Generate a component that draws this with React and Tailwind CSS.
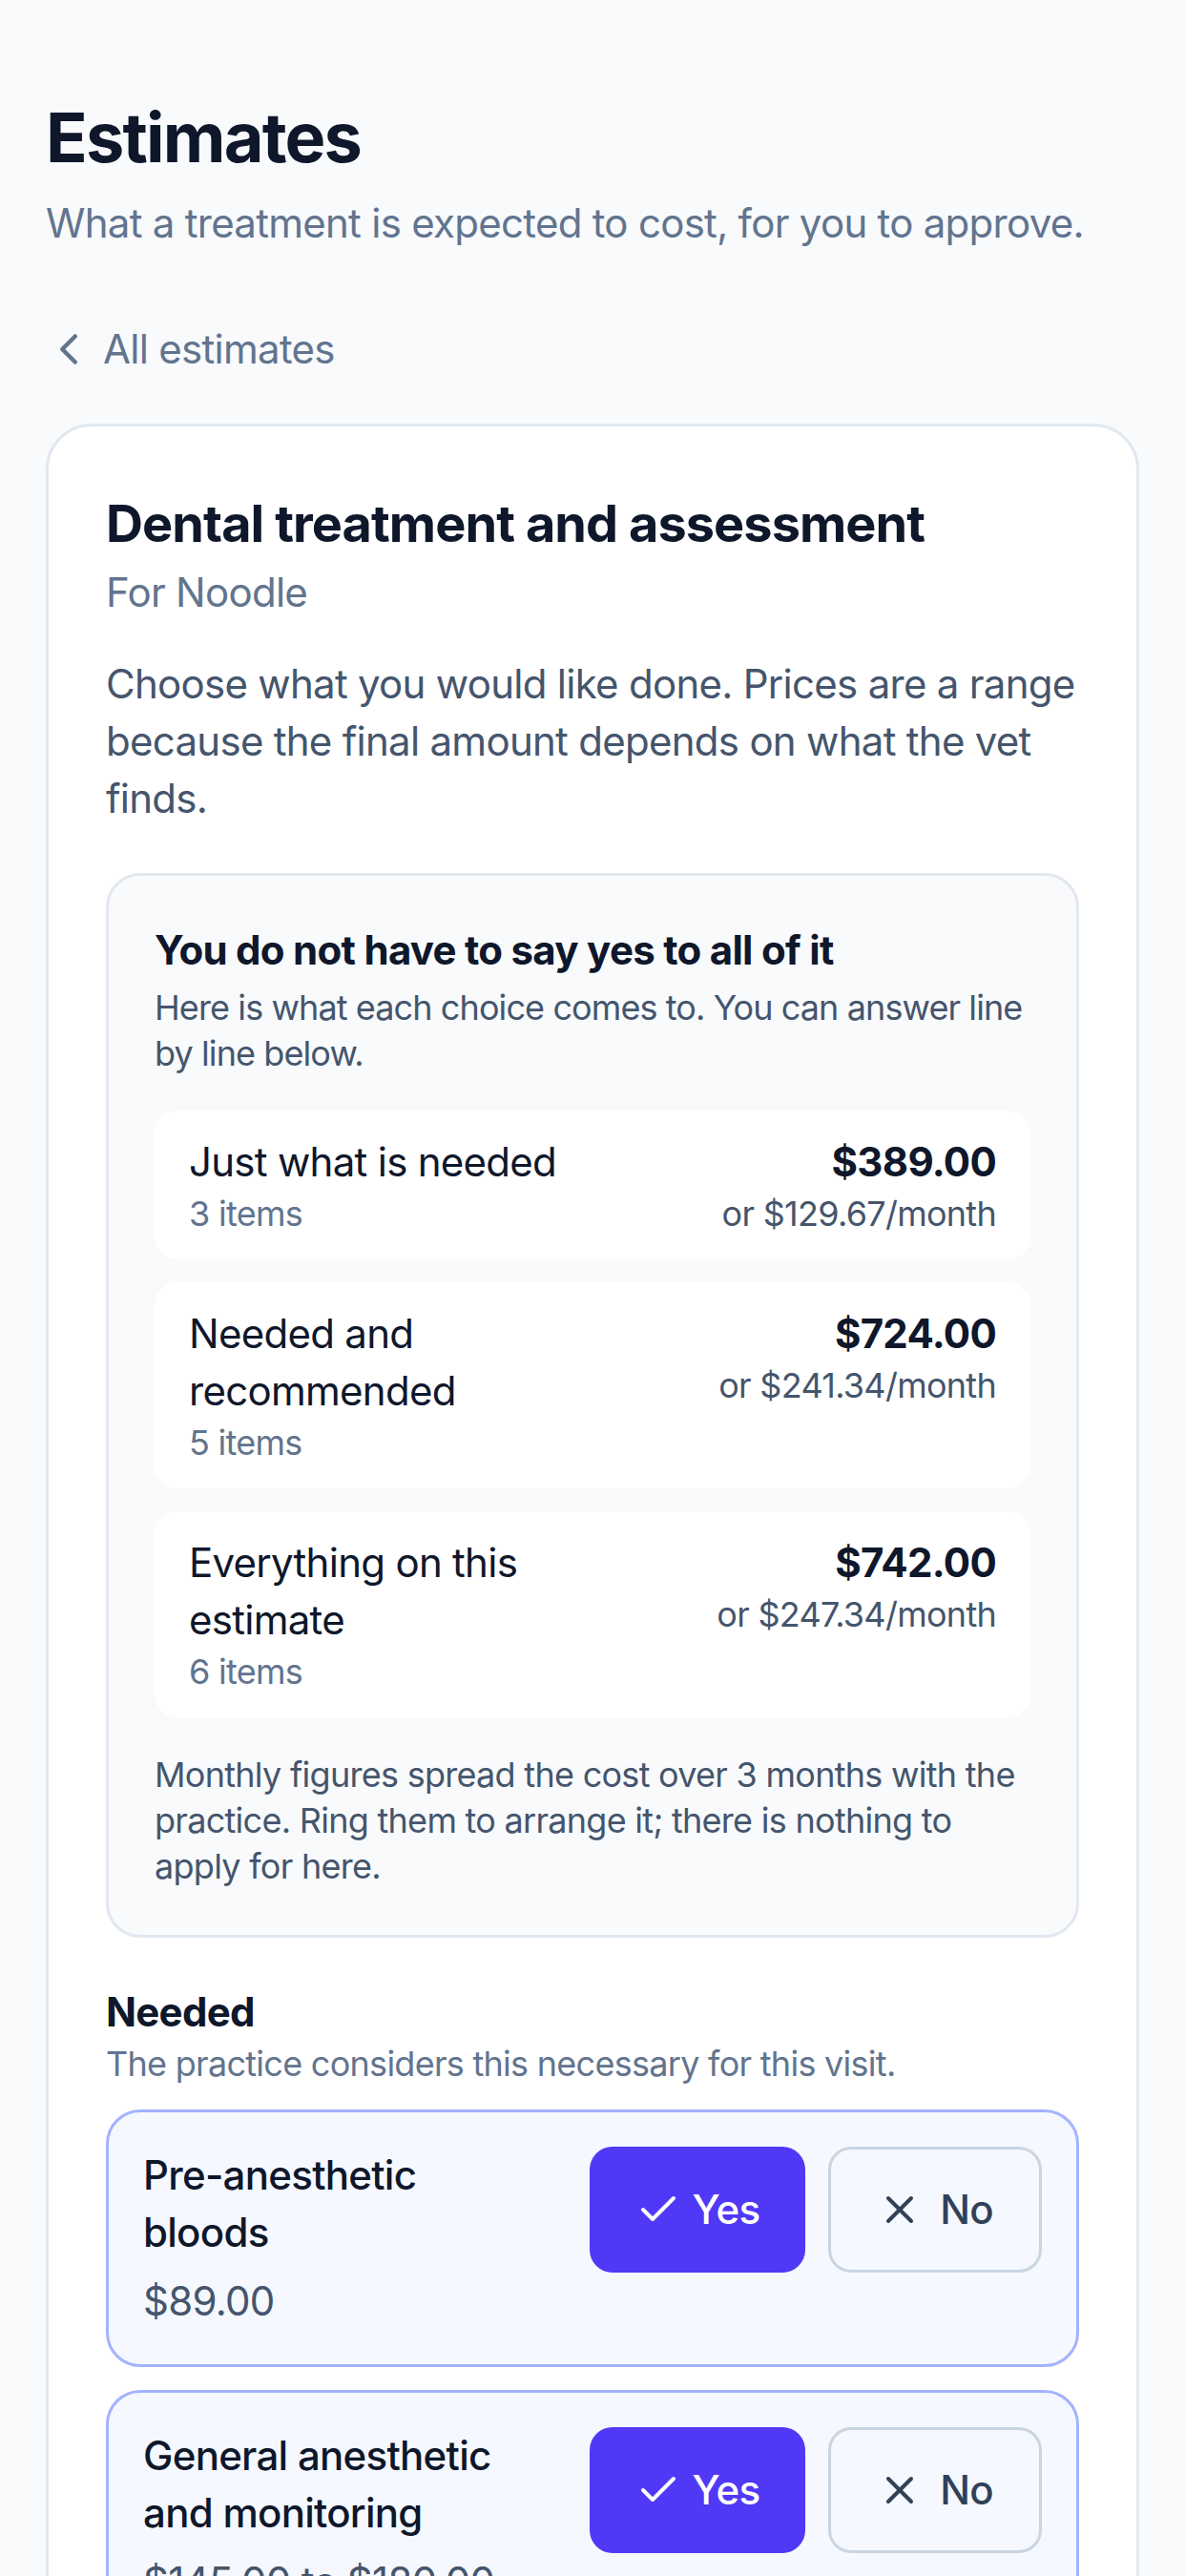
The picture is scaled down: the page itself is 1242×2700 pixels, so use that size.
import React, { useState } from "react";
import { Check, ChevronLeft, X } from "lucide-react";

const choices = [
  { label: "Just what is needed", count: "3 items", total: "$389.00", monthly: "or $129.67/month" },
  { label: "Needed and recommended", count: "5 items", total: "$724.00", monthly: "or $241.34/month" },
  { label: "Everything on this estimate", count: "6 items", total: "$742.00", monthly: "or $247.34/month" },
];

const sections = [
  {
    title: "Needed",
    note: "The practice considers this necessary for this visit.",
    items: [
      { id: "bloods", name: "Pre-anesthetic bloods", price: "$89.00" },
      { id: "ga", name: "General anesthetic and monitoring", price: "$145.00 to $180.00" },
      { id: "scale", name: "Scale and polish", price: "$120.00" },
    ],
  },
  {
    title: "Recommended",
    note: "The vet advises this, but it can wait if you prefer.",
    items: [
      { id: "xray", name: "Dental radiographs", price: "$210.00" },
      { id: "extract", name: "Extractions if required", price: "$0.00 to $125.00" },
    ],
  },
  {
    title: "Optional",
    note: "Nice to have. Entirely up to you.",
    items: [{ id: "chews", name: "Take-home dental chews", price: "$18.00" }],
  },
];

const AnswerRow = ({ item, answer, setAnswer }) => {
  const yes = answer === "yes";
  return (
    <div className="flex items-start justify-between gap-4 rounded-xl border border-indigo-300 bg-[#f5f8ff] p-3">
      <div className="min-w-0 flex-1">
        <p className="text-sm font-medium text-slate-900">{item.name}</p>
        <p className="mt-1 text-sm text-slate-600">{item.price}</p>
      </div>
      <div className="flex shrink-0 gap-2">
        <button
          type="button"
          onClick={() => setAnswer("yes")}
          className={
            yes
              ? "inline-flex h-11 items-center gap-1 rounded-lg bg-indigo-600 px-4 text-sm font-medium text-white"
              : "inline-flex h-11 items-center gap-1 rounded-lg border border-slate-300 px-4 text-sm font-medium text-slate-700"
          }
        >
          <Check size={16} />
          Yes
        </button>
        <button
          type="button"
          onClick={() => setAnswer("no")}
          className={
            !yes
              ? "inline-flex h-11 items-center gap-1.5 rounded-lg bg-slate-700 px-4 text-sm font-medium text-white"
              : "inline-flex h-11 items-center gap-1.5 rounded-lg border border-slate-300 px-4 text-sm font-medium text-slate-700"
          }
        >
          <X size={16} />
          No
        </button>
      </div>
    </div>
  );
};

export default function App() {
  const [answers, setAnswers] = useState({
    bloods: "yes",
    ga: "yes",
    scale: "yes",
    xray: "yes",
    extract: "yes",
    chews: "yes",
  });

  return (
    <div className="min-h-screen bg-slate-50 font-['Inter',sans-serif] tracking-[-0.015em]">
      <div className="w-[414px] px-4 pt-8 pb-10 [zoom:3]">
        <h1 className="text-2xl font-bold tracking-tight text-slate-900">Estimates</h1>
        <p className="mt-1 text-sm text-slate-500">
          What a treatment is expected to cost, for you to approve.
        </p>

        <a href="#" className="-ml-px mt-6 flex items-center gap-[3px] text-sm text-slate-500">
          <ChevronLeft size={18} />
          All estimates
        </a>

        <div className="mt-4 rounded-2xl border border-slate-200 bg-white p-5">
          <h2 className="text-lg font-bold tracking-[-0.017em] text-slate-900">
            Dental treatment and assessment
          </h2>
          <p className="text-sm text-slate-500">For Noodle</p>
          <p className="mt-3 text-sm text-slate-600">
            Choose what you would like done. Prices are a range because the final amount
            depends on what the vet finds.
          </p>

          <div className="mt-4 rounded-xl border border-slate-200 bg-slate-50 p-4">
            <h3 className="text-sm font-bold text-slate-900">You do not have to say yes to all of it</h3>
            <p className="mt-0.5 text-xs tracking-[-0.025em] text-slate-600">
              Here is what each choice comes to. You can answer line by line below.
            </p>
            <div className="mt-3 space-y-2">
              {choices.map((c) => (
                <div key={c.label} className="flex items-start justify-between gap-4 rounded-lg bg-white px-3 py-2">
                  <div className="min-w-0 flex-1">
                    <p className="text-sm text-slate-900">{c.label}</p>
                    <p className="text-xs text-slate-500">{c.count}</p>
                  </div>
                  <div className="shrink-0 text-right">
                    <p className="text-sm font-bold text-slate-900">{c.total}</p>
                    <p className="whitespace-nowrap text-xs text-slate-600">{c.monthly}</p>
                  </div>
                </div>
              ))}
            </div>
            <p className="mt-3 text-xs text-slate-600">
              Monthly figures spread the cost over 3 months with the practice. Ring them to
              arrange it; there is nothing to apply for here.
            </p>
          </div>

          {sections.map((s) => (
            <div key={s.title} className="mt-4">
              <h3 className="text-sm font-bold text-slate-900">{s.title}</h3>
              <p className="text-xs text-slate-500">{s.note}</p>
              <div className="mt-2 space-y-2">
                {s.items.map((item) => (
                  <AnswerRow
                    key={item.id}
                    item={item}
                    answer={answers[item.id]}
                    setAnswer={(v) => setAnswers({ ...answers, [item.id]: v })}
                  />
                ))}
              </div>
            </div>
          ))}
        </div>
      </div>
    </div>
  );
}
